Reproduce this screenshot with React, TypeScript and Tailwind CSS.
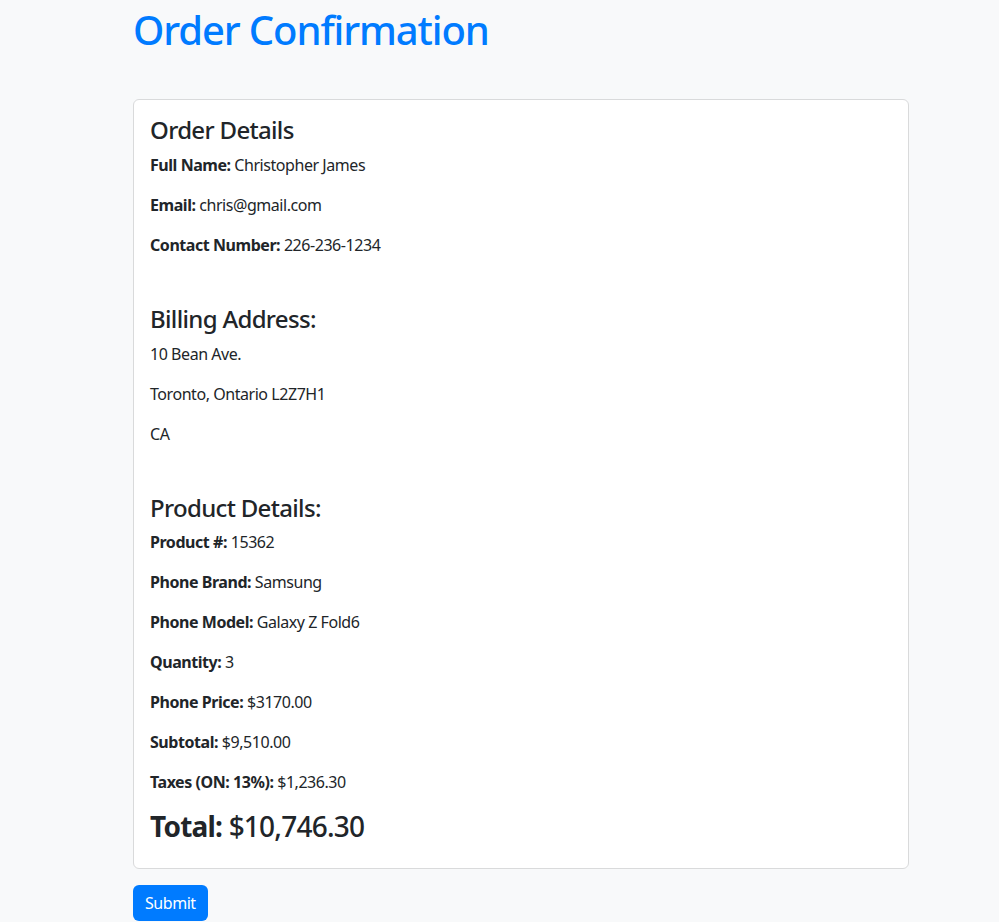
import React from "react";

const font = { fontFamily: '"Noto Sans", "Open Sans", sans-serif' };

function Row({ label, value }: { label: string; value: string }) {
  return (
    <p className="mb-4 text-base leading-6">
      <strong className="font-bold">{label}</strong> {value}
    </p>
  );
}

function SectionTitle({ children, first }: { children: React.ReactNode; first?: boolean }) {
  return (
    <h4
      className={
        first
          ? "mb-2 text-2xl leading-[28.8px] font-medium tracking-[-0.028em]"
          : "mt-12 mb-2 text-2xl leading-[28.8px] font-medium tracking-[-0.028em]"
      }
    >
      {children}
    </h4>
  );
}

export default function App() {
  return (
    <div
      className="min-h-[922px] bg-[#f8f9fa] pt-[6px] text-[#212529] tracking-[-0.028em]"
      style={font}
    >
      <div className="ml-[133px] w-[776px] pb-8">
        <h1 className="text-[40px] leading-[48px] font-medium tracking-[-0.028em] text-[#007bff]">
          Order Confirmation
        </h1>

        <div className="mt-[45px] rounded-md border border-[#d9dadb] bg-white p-4">
          <SectionTitle first>Order Details</SectionTitle>
          <Row label="Full Name:" value="Christopher James" />
          <Row label="Email:" value="chris@gmail.com" />
          <Row label="Contact Number:" value="226-236-1234" />

          <SectionTitle>Billing Address:</SectionTitle>
          <p className="mb-4 leading-6">10 Bean Ave.</p>
          <p className="mb-4 leading-6">Toronto, Ontario L2Z7H1</p>
          <p className="mb-4 leading-6">CA</p>

          <SectionTitle>Product Details:</SectionTitle>
          <Row label="Product #:" value="15362" />
          <Row label="Phone Brand:" value="Samsung" />
          <Row label="Phone Model:" value="Galaxy Z Fold6" />
          <Row label="Quantity:" value="3" />
          <Row label="Phone Price:" value="$3170.00" />
          <Row label="Subtotal:" value="$9,510.00" />
          <Row label="Taxes (ON: 13%):" value="$1,236.30" />

          <h3 className="mb-2 text-[28px] leading-[33.6px] font-medium tracking-[-0.028em]">
            <strong className="font-bold">Total:</strong> $10,746.30
          </h3>
        </div>

        <button className="mt-4 rounded-md bg-[#007bff] px-3 py-1.5 text-base leading-6 text-white">
          Submit
        </button>
      </div>
    </div>
  );
}
